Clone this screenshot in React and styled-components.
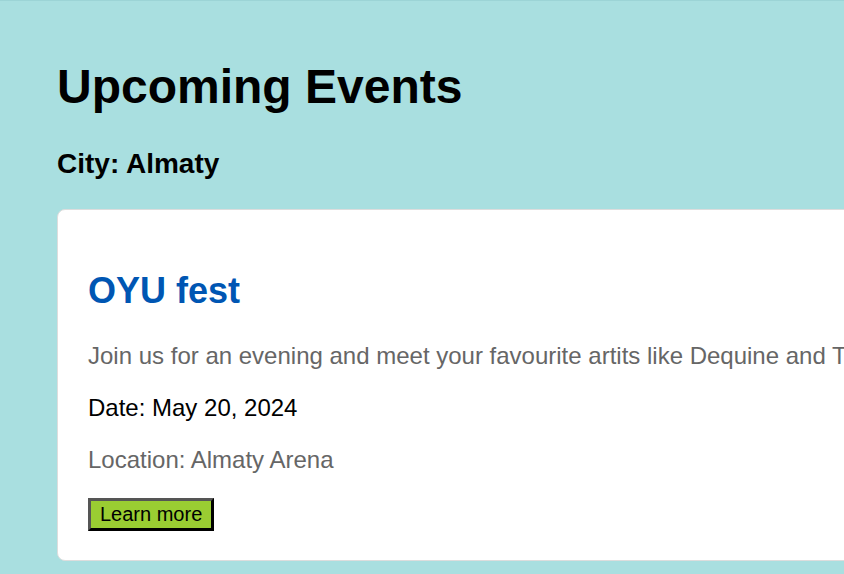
import styled, { createGlobalStyle } from 'styled-components';

const GlobalStyle = createGlobalStyle`
  html, body {
    margin: 0;
    padding: 0;
    background: #a9dfe0;
    overflow: hidden;
  }
  body {
    border-top: 1px solid #9cd4d6;
    font-family: "Liberation Sans", Arial, sans-serif;
  }
`;

const event = {
  title: 'OYU fest',
  description:
    'Join us for an evening and meet your favourite artits like Dequine and Tima Sharipova at the biggest festival of the year',
  date: 'May 20, 2024',
  location: 'Almaty Arena',
};

const App = () => {
  return (
    <>
      <GlobalStyle />
      <Page>
        <Title>Upcoming Events</Title>
        <City>City: Almaty</City>
        <Card>
          <EventName>{event.title}</EventName>
          <Text $muted>{event.description}</Text>
          <Text>Date: {event.date}</Text>
          <Text $muted>Location: {event.location}</Text>
          <MoreButton>Learn more</MoreButton>
        </Card>
      </Page>
    </>
  );
};

const Page = styled.main`
  display: flex;
  flex-direction: column;
  align-items: flex-start;
  width: 1400px;
  padding: 58px 0 40px 57px;
`;

const Title = styled.h1`
  margin: 0;
  font-size: 48px;
  font-weight: 700;
  color: #000;
`;

const City = styled.h3`
  margin: 34px 0 0;
  font-size: 28px;
  font-weight: 700;
  color: #000;
`;

const Card = styled.section`
  align-self: stretch;
  display: flex;
  flex-direction: column;
  align-items: flex-start;
  margin-top: 29px;
  padding: 30px 30px 29px;
  background: #fff;
  border: 1px solid #ddd;
  border-radius: 8px;
`;

const EventName = styled.h2`
  margin: 30px 0 6px;
  font-size: 36px;
  font-weight: 700;
  color: #0056b3;
`;

const Text = styled.p`
  margin: 24px 0 0;
  font-size: 24px;
  white-space: nowrap;
  color: ${(p) => (p.$muted ? '#666' : '#000')};
`;

const MoreButton = styled.button`
  margin-top: 24px;
  padding: 2px 9px;
  font-family: "Liberation Sans", Arial, sans-serif;
  font-size: 20px;
  color: #000;
  background: #9acd32;
  border: 3px solid;
  border-color: #555 #000 #000 #555;
  cursor: pointer;
`;

export default App;
